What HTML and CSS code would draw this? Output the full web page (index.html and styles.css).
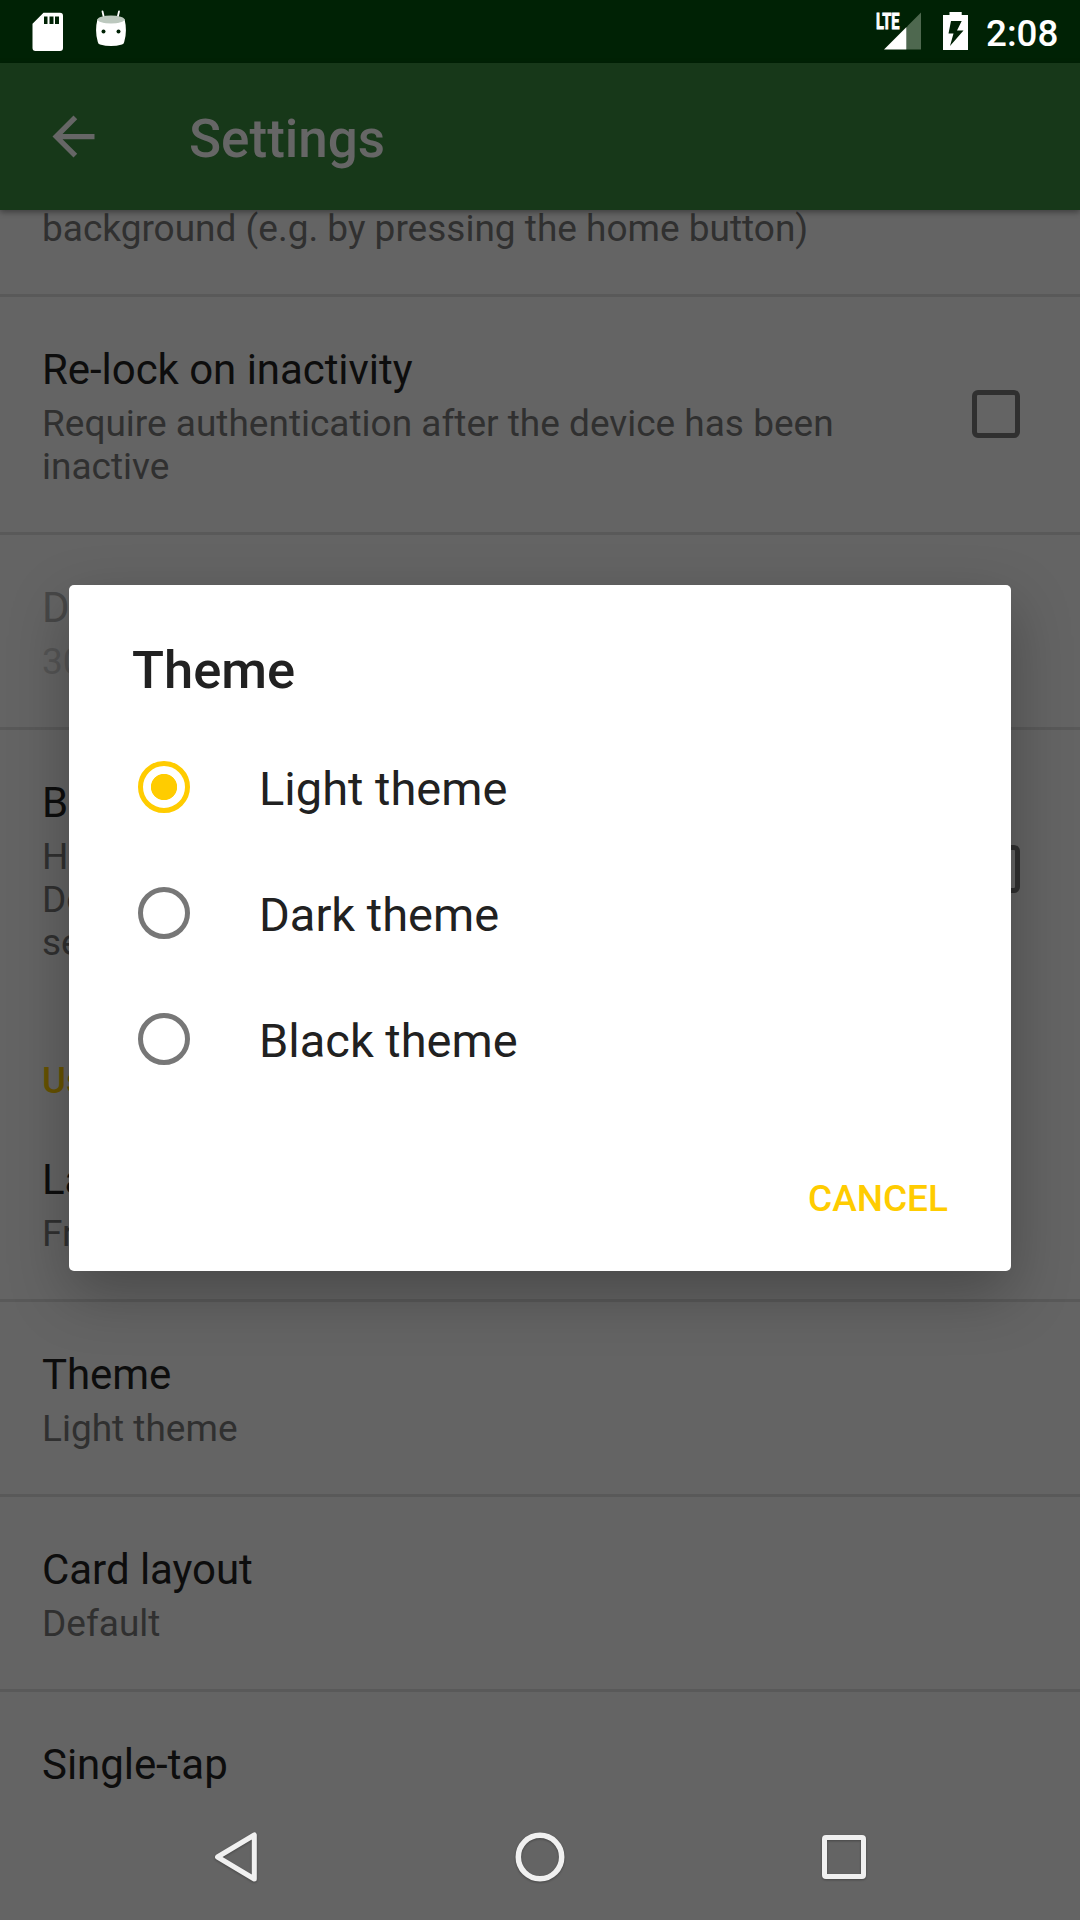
FILE: index.html
```html
<!DOCTYPE html>
<html lang="en">
<head>
<meta charset="utf-8">
<title>Settings</title>
<link rel="stylesheet" href="styles.css">
</head>
<body>
<div class="screen">
  <header class="status-bar">
    <svg class="icon-sd" width="32" height="40" viewBox="0 0 32 40"><path fill="#fff" fill-rule="evenodd" d="M11.5 .7H28a3 3 0 0 1 3 3V36a3 3 0 0 1-3 3H3.500a3 3 0 0 1-3-3V11.700ZM12 4.500V12h3.500V4.500ZM17.500 4.500V12h4V4.500ZM23 4.500V12h4V4.500Z"/></svg>
    <svg class="icon-debug" width="32" height="38" viewBox="0 0 32 38">
      <path d="M7.500 1.500 9 8M24 1.500 22.500 8" stroke="#fff" stroke-width="1.800" stroke-linecap="round"/>
      <path fill="#fff" d="M2.500 9Q16 15 29.500 9Q32.500 21 29.200 32Q28.800 34 27 34.500Q16 37.500 5 34.500Q3.200 34 2.800 32Q-.5 21 2.500 9Z"/>
      <ellipse cx="16" cy="9.500" rx="13.500" ry="4" fill="#bcc8be"/>
      <circle cx="8.500" cy="21.500" r="2" fill="#002205"/><circle cx="23.500" cy="21.500" r="2" fill="#002205"/>
    </svg>
    <span class="spacer"></span>
    <svg class="icon-signal" width="46" height="40" viewBox="0 0 46 40">
      <path fill="#4e684f" d="M32 14.500 46 .5V37.500H32Z"/><path fill="#fff" d="M9 37.500 31.500 15V37.500Z"/>
      <text class="lte" x="1" y="17" textLength="23.500" lengthAdjust="spacingAndGlyphs">LTE</text>
    </svg>
    <svg class="icon-battery" width="25" height="40" viewBox="0 0 25 40"><path fill="#fff" fill-rule="evenodd" d="M6.500 0H18.700V3H25V38H0V3H6.500ZM8 9 5.500 21.500H10.500L7 34 20.500 18.500H14L18.700 9Z"/></svg>
    <span class="clock">2:08</span>
  </header>

  <div class="app-bar">
    <svg class="back" width="63" height="63" viewBox="0 0 24 24"><path fill="#666" d="M20 11H7.830l5.590-5.590L12 4l-8 8 8 8 1.410-1.410L7.830 13H20v-2z"/></svg>
    <h1 class="app-title">Settings</h1>
  </div>

  <main class="list">
    <div class="row row-first"><p class="summary">background (e.g. by pressing the home button)</p></div>
    <div class="row divided">
      <div class="texts"><p class="label">Re-lock on inactivity</p><p class="summary">Require authentication after the device has been<br>inactive</p></div>
      <span class="checkbox"></span>
    </div>
    <div class="row divided disabled"><div class="texts"><p class="label">D</p><p class="summary">30</p></div></div>
    <div class="row divided">
      <div class="texts"><p class="label">B</p><p class="summary">H<br>Do<br>se</p></div>
      <span class="checkbox"></span>
    </div>
    <h2 class="category">Us</h2>
    <div class="row"><div class="texts"><p class="label">La</p><p class="summary">Fr</p></div></div>
    <div class="row divided"><div class="texts"><p class="label">Theme</p><p class="summary">Light theme</p></div></div>
    <div class="row divided"><div class="texts"><p class="label">Card layout</p><p class="summary">Default</p></div></div>
    <div class="row divided"><div class="texts"><p class="label">Single-tap</p></div></div>
  </main>

  <nav class="nav-bar">
    <svg width="56" height="56" viewBox="0 0 56 56"><path d="M46.300 6V50L9.500 28Z" fill="none" stroke="#f0f0f0" stroke-width="5" stroke-linejoin="round"/></svg>
    <svg width="56" height="56" viewBox="0 0 56 56"><circle cx="28" cy="28" r="21.700" fill="none" stroke="#f0f0f0" stroke-width="5.500"/></svg>
    <svg width="56" height="56" viewBox="0 0 56 56"><rect x="8.500" y="8.500" width="39" height="39" rx="1.500" fill="none" stroke="#f0f0f0" stroke-width="5"/></svg>
  </nav>

  <section class="dialog">
    <h2 class="dialog-title">Theme</h2>
    <div class="options">
      <div class="option"><span class="radio checked"></span><span>Light theme</span></div>
      <div class="option"><span class="radio"></span><span>Dark theme</span></div>
      <div class="option"><span class="radio"></span><span>Black theme</span></div>
    </div>
    <div class="actions"><span class="cancel">CANCEL</span></div>
  </section>
</div>
</body>
</html>
```

FILE: styles.css
```css
* { box-sizing: border-box; margin: 0; padding: 0; }
body { font-family: Roboto, sans-serif; }
svg { display: block; flex: none; }

.screen {
  position: relative;
  display: flex;
  flex-direction: column;
  width: 1080px;
  height: 1920px;
  overflow: hidden;
  background: #646464;
}

.status-bar {
  display: flex;
  align-items: flex-start;
  height: 63px;
  padding: 12px 21px 0 32px;
  background: #002205;
}
.icon-debug { margin: -2px 0 0 31px; }
.spacer { flex: 1; }
.lte { font-size: 22px; font-weight: 700; fill: #fff; stroke: #fff; stroke-width: .9px; }
.icon-signal { margin-right: 22px; overflow: visible; }
.clock {
  width: 91px;
  padding-left: 18px;
  font-size: 36.75px;
  font-weight: 500;
  line-height: 43px;
  color: #fff;
}

.app-bar {
  position: relative;
  display: flex;
  align-items: center;
  height: 147px;
  padding-left: 42px;
  background: #173819;
  box-shadow: 0 2px 6px rgba(0, 0, 0, .4);
}
.app-title {
  margin-left: 84px;
  font-size: 53px;
  font-weight: 500;
  line-height: 61px;
  color: #666;
  padding-top: 5px;
}

.list { height: 1584px; overflow: hidden; }
.row {
  display: flex;
  align-items: flex-start;
  justify-content: space-between;
  padding: 48px 60px 44px 42px;
}
.row-first { margin-top: -3px; padding-top: 0; }
.divided { border-top: 3px solid #595959; }
.label { margin-bottom: 8px; font-size: 42px; line-height: 49px; letter-spacing: -.05px; color: #0d0d0d; }
.summary { font-size: 37px; line-height: 43px; color: #303030; }
.disabled .label { color: #474747; }
.disabled .summary { color: #545454; }
.checkbox {
  flex: none;
  align-self: center;
  width: 48px;
  height: 48px;
  margin-bottom: 5px;
  border: 5.5px solid #303030;
  border-radius: 6px;
}
.category {
  height: 99px;
  padding: 51px 42px 0;
  font-size: 36.75px;
  font-weight: 500;
  line-height: 43px;
  color: #665200;
}

.nav-bar {
  display: flex;
  align-items: center;
  justify-content: space-between;
  height: 126px;
  padding: 0 208px;
}
.nav-bar svg { filter: drop-shadow(0 1px 1px rgba(0, 0, 0, .3)); }

.dialog {
  position: absolute;
  top: 585px;
  left: 69px;
  width: 942px;
  height: 686px;
  border-radius: 5px;
  background: #fff;
  box-shadow: 0 22px 60px rgba(0, 0, 0, .28);
  color: #212121;
}
.dialog-title {
  padding: 55px 63px 0;
  font-size: 52.5px;
  font-weight: 500;
  line-height: 61px;
}
.options { padding-top: 23px; }
.option {
  display: flex;
  align-items: center;
  gap: 69px;
  height: 126px;
  padding-left: 69px;
  font-size: 47px;
  line-height: 56px;
}
.option span:last-child { padding-top: 4px; }
.radio {
  display: flex;
  width: 52px;
  height: 52px;
  border: 5.5px solid #777;
  border-radius: 50%;
}
.radio.checked {
  border-color: #fc0;
  background: radial-gradient(circle, #fc0 12.700px, transparent 13.500px);
}
.actions {
  display: flex;
  justify-content: flex-end;
  padding: 75px 63px 0;
}
.cancel { font-size: 37px; font-weight: 500; line-height: 43px; color: #fc0; }
```
